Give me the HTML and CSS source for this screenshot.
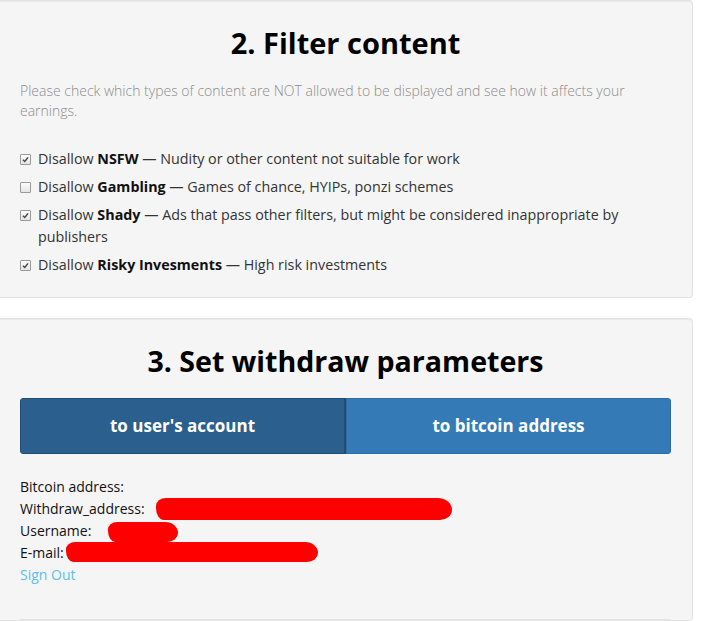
FILE: index.html
```html
<!DOCTYPE html>
<html lang="en">
<head>
  <meta charset="UTF-8">
  <meta name="viewport" content="width=device-width, initial-scale=1.0">
  <title>Publisher settings</title>
  <link rel="stylesheet" href="styles.css">
</head>
<body>
  <div class="well">
    <h2 class="well-title">2. Filter content</h2>
    <p class="hint">Please check which types of content are NOT allowed to be displayed and see how it affects your earnings.</p>
    <ul class="filters">
      <li>
        <span class="box checked"><svg viewBox="0 0 10 10" width="10" height="10"><path d="M2.2 5.2 L4.2 7.2 L7.8 2.6" fill="none" stroke="#444" stroke-width="1.6"/></svg></span>
        <span>Disallow <b>NSFW</b> — Nudity or other content not suitable for work</span>
      </li>
      <li>
        <span class="box"></span>
        <span>Disallow <b>Gambling</b> — Games of chance, HYIPs, ponzi schemes</span>
      </li>
      <li>
        <span class="box checked"><svg viewBox="0 0 10 10" width="10" height="10"><path d="M2.2 5.2 L4.2 7.2 L7.8 2.6" fill="none" stroke="#444" stroke-width="1.6"/></svg></span>
        <span>Disallow <b>Shady</b> — Ads that pass other filters, but might be considered inappropriate by publishers</span>
      </li>
      <li>
        <span class="box checked"><svg viewBox="0 0 10 10" width="10" height="10"><path d="M2.2 5.2 L4.2 7.2 L7.8 2.6" fill="none" stroke="#444" stroke-width="1.6"/></svg></span>
        <span>Disallow <b>Risky Invesments</b> — High risk investments</span>
      </li>
    </ul>
  </div>

  <div class="well">
    <h2 class="well-title small">3. Set withdraw parameters</h2>
    <div class="btn-group">
      <button class="btn active">to user's account</button>
      <button class="btn">to bitcoin address</button>
    </div>
    <div class="account">
      <div class="line">Bitcoin address:</div>
      <div class="line">Withdraw_address: <span class="scribble s-wide"></span></div>
      <div class="line">Username: <span class="scribble s-short"></span></div>
      <div class="line">E-mail: <span class="scribble s-mail"></span></div>
      <a href="#" class="signout">Sign Out</a>
    </div>
    <hr class="divider">
  </div>
</body>
</html>
```

FILE: styles.css
```css
body {
  margin: 0;
  font-family: 'Open Sans', 'DejaVu Sans', sans-serif;
  font-size: 14px;
  line-height: 22px;
  color: #333;
  background-color: #fff;
  width: 693px;
}
.well {
  background-color: #f5f5f5;
  border: 1px solid #e3e3e3;
  border-left: none;
  border-radius: 0 4px 4px 0;
  box-shadow: inset 0 1px 1px rgba(0, 0, 0, 0.05);
  padding: 0 21px 0 20px;
  margin-bottom: 20px;
}
.well-title {
  margin: 0;
  padding-top: 25px;
  font-size: 29px;
  line-height: 33px;
  font-weight: 700;
  text-align: center;
  color: #000;
}
.well-title.small {
  font-size: 28.6px;
}
.hint {
  margin: 22px 0 0;
  color: #8c8c8c;
  font-weight: 300;
  line-height: 20px;
}
.filters {
  list-style: none;
  margin: 27px 0 0;
  padding: 0 0 21px;
  display: flex;
  flex-direction: column;
  gap: 6px;
}
.filters li {
  display: flex;
  align-items: flex-start;
  font-size: 14.3px;
}
.filters b {
  color: #111;
}
.box {
  flex: none;
  width: 9px;
  height: 9px;
  margin: 6px 7px 0 0;
  border: 1px solid #9a9a9a;
  border-radius: 1px;
  background: linear-gradient(#fdfdfd, #e4e4e4);
  display: flex;
  align-items: center;
  justify-content: center;
}
.box svg {
  width: 9px;
  height: 9px;
}
.btn-group {
  display: flex;
  margin-top: 21px;
  border-radius: 4px;
  overflow: hidden;
}
.btn {
  flex: 1;
  padding: 14px 10px 15px;
  font-family: 'Open Sans', 'DejaVu Sans', sans-serif;
  font-size: 17px;
  line-height: 25px;
  font-weight: 700;
  color: #fff;
  background-color: #337ab7;
  border: 1px solid #2e6da4;
  cursor: pointer;
}
.btn.active {
  background-color: #2b5f8d;
  border-color: #204d74;
  border-right-width: 2px;
}
.account {
  margin-top: 22px;
  color: #111;
}
.line {
  position: relative;
}
.signout {
  color: #5bc0ee;
  text-decoration: none;
}
.scribble {
  position: absolute;
  height: 22px;
  background-color: #ff0000;
  border-radius: 10px 14px 12px 8px / 8px 12px 10px 12px;
}
.s-wide {
  left: 136px;
  top: 0;
  width: 296px;
}
.s-short {
  left: 88px;
  top: 2px;
  width: 70px;
  height: 20px;
}
.s-mail {
  left: 46px;
  top: 0;
  width: 252px;
  height: 20px;
}
.divider {
  margin: 33px 0 0;
  border: none;
  border-top: 1px solid #e3e3e3;
  height: 0;
}
```
